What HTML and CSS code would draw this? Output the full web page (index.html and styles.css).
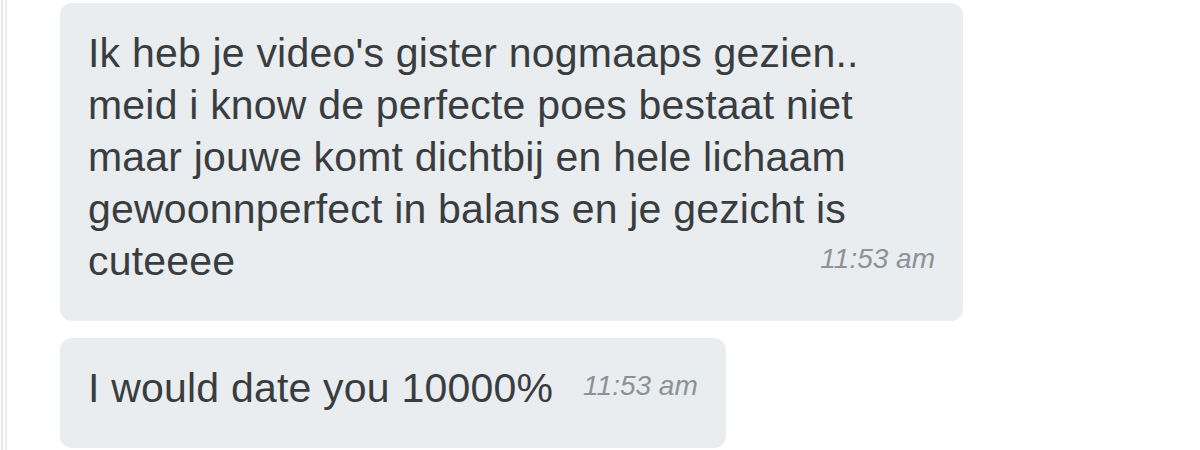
FILE: index.html
```html
<!DOCTYPE html>
<html lang="en">
<head>
  <meta charset="UTF-8" />
  <title>Chat</title>
  <link rel="stylesheet" href="styles.css">
</head>
<body>
<div class="page">
  <div class="rail"></div>
  <div class="chat">
    <div class="bubble wide">
      Ik heb je video's gister nogmaaps gezien..<br>
      meid i know de perfecte poes bestaat niet<br>
      maar jouwe komt dichtbij en hele lichaam<br>
      gewoonnperfect in balans en je gezicht is<br>
      cuteeee<span class="time">11:53 am</span>
    </div>
    <div class="bubble">
      I would date you 10000%<span class="time">11:53 am</span>
    </div>
  </div>
</div>
</body>
</html>
```

FILE: styles.css
```css
* { box-sizing: border-box; }
body {
  margin: 0;
  background: #ffffff;
  font-family: 'Liberation Sans', Arial, sans-serif;
  color: #3a3d40;
}
.page {
  display: flex;
  height: 450px;
  overflow: hidden;
}
.rail {
  width: 6px;
  margin-left: 1px;
  border-left: 2px solid #e8e8e8;
  border-right: 2px solid #ececec;
}
.chat {
  padding: 3px 0 0 53px;
  display: flex;
  flex-direction: column;
  align-items: flex-start;
  gap: 17px;
}
.bubble {
  background: #e9edf0;
  border-radius: 12px;
  padding: 24px 28px 34px 28px;
  font-size: 41px;
  line-height: 52px;
  letter-spacing: 0.2px;
  max-width: 903px;
}
.bubble.wide {
  width: 903px;
}
.time {
  float: right;
  margin-left: 30px;
  margin-top: -2px;
  font-size: 28px;
  letter-spacing: 0;
  font-style: italic;
  color: #8e9296;
}
```
